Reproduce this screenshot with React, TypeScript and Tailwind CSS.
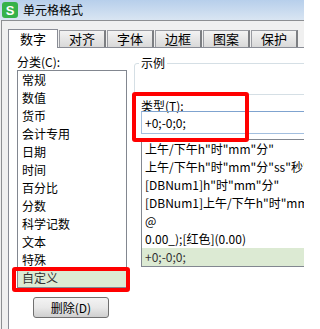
const leftItems = [
  '常规',
  '数值',
  '货币',
  '会计专用',
  '日期',
  '时间',
  '百分比',
  '分数',
  '科学记数',
  '文本',
  '特殊',
  '自定义',
];

const formats = [
  '上午/下午h"时"mm"分"',
  '上午/下午h"时"mm"分"ss"秒"',
  '[DBNum1]h"时"mm"分"',
  '[DBNum1]上午/下午h"时"mm"分"',
  '@',
  '0.00_);[红色](0.00)',
  '+0;-0;0;',
];

const tabs = ['对齐', '字体', '边框', '图案', '保护'];

export default function App() {
  return (
    <div className="relative w-[304px] h-[329px] overflow-hidden bg-[#f0f0f0] text-black font-['Noto_Sans_CJK_SC','Microsoft_YaHei',sans-serif] flex flex-col">
      {/* Title bar */}
      <div className="h-[20px] shrink-0 flex items-center bg-linear-to-b from-[#b7cfeb] to-[#d9e5f2]">
        <div className="ml-[2px] w-[16px] h-[16px] rounded-[3px] bg-[#35b24a] flex items-center justify-center">
          <span className="text-white text-[13px] leading-none font-bold font-['Liberation_Sans',sans-serif]">S</span>
        </div>
        <span className="ml-[5px] text-[12px] leading-[20px]">单元格格式</span>
      </div>

      {/* Dialog frame */}
      <div className="flex-1 ml-px border-l border-t border-[#8d8f92] flex flex-col">
        {/* Tabs */}
        <div className="pt-[8px] pl-[6px] flex items-end gap-px relative z-10">
          <div className="w-[50px] h-[19px] -mb-px bg-white border-l border-t border-r border-[#898c95] flex items-center justify-center text-[13px]">
            数字
          </div>
          {tabs.map((t) => (
            <div
              key={t}
              className="w-[47px] h-[17px] bg-linear-to-b from-[#f3f3f3] to-[#d9d9d9] border-l border-t border-[#9a9ca2] border-r-2 border-r-[#7c7e82] flex items-center justify-center text-[13px]"
            >
              {t}
            </div>
          ))}
        </div>

        {/* Tab panel */}
        <div className="flex-1 ml-[6px] bg-white border-l border-t border-[#898c95] flex">
          {/* Category column */}
          <div className="pl-[8px] w-[118px] shrink-0 flex flex-col">
            <div className="mt-[6px] text-[12px] leading-[16px]">分类(C):</div>
            <div className="w-[110px] border border-[#828790] flex flex-col">
              {leftItems.map((item) => (
                <div
                  key={item}
                  className={
                    item === '自定义'
                      ? 'h-[18px] pl-[4px] text-[12px] leading-[18px] bg-[#dcead3] text-[#333]'
                      : 'h-[18px] pl-[4px] text-[12px] leading-[18px]'
                  }
                >
                  {item}
                </div>
              ))}
            </div>
            <button className="mt-[9px] ml-[16px] w-[76px] h-[21px] rounded-[3px] border border-[#707070] bg-linear-to-b from-[#f3f3f3] via-[#e8e8e8] to-[#cfcfcf] text-[12px] leading-[19px]">
              删除(D)
            </button>
          </div>

          {/* Sample / type column */}
          <div className="ml-[7px] w-[200px] shrink-0 flex flex-col">
            <div className="relative mt-[15px] h-[32px] border border-[#d5dfe5] rounded-[3px]">
              <span className="absolute left-[4px] -top-[8px] px-[2px] bg-white text-[12px] leading-[14px]">示例</span>
            </div>
            <div className="mt-[5px] pl-[7px] text-[12px] leading-[11px]">类型(T):</div>
            <div className="ml-[7px] h-[23px] border border-[#a3bfdf] border-t-[#7fa3cf] pl-[3px] text-[12px] leading-[21px]">
              +0;-0;0;
            </div>
            <div className="ml-[7px] mt-[5px] border border-[#828790] flex flex-col">
              {formats.map((f, i) => (
                <div
                  key={f}
                  className={
                    i === formats.length - 1
                      ? 'h-[18px] pl-[3px] text-[12px] leading-[18px] whitespace-nowrap bg-[#dcead3] text-[#333]'
                      : 'h-[18px] pl-[3px] text-[12px] leading-[18px] whitespace-nowrap'
                  }
                >
                  {f}
                </div>
              ))}
            </div>
          </div>
        </div>
      </div>

      {/* Red annotation boxes */}
      <div className="absolute left-[132px] top-[92px] w-[117px] h-[50px] border-4 border-[#ff0000] rounded-[3px]" />
      <div className="absolute left-[12px] top-[267px] w-[118px] h-[25px] border-4 border-[#ff0000] rounded-[3px]" />
    </div>
  );
}
